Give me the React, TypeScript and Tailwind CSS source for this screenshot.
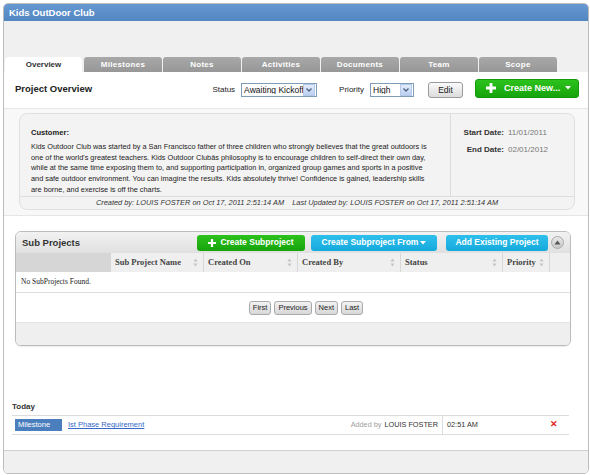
import React from "react";

const tabs = ["Overview", "Milestones", "Notes", "Activities", "Documents", "Team", "Scope"];

function SortIcon() {
  return (
    <svg width="5" height="9" viewBox="0 0 5 9" className="shrink-0">
      <path d="M2.5 0.5 L4.5 3.5 L0.5 3.5 Z" fill="#c4c4c4" />
      <path d="M2.5 8.5 L4.5 5.5 L0.5 5.5 Z" fill="#c4c4c4" />
    </svg>
  );
}

function Select({ value, width }: { value: string; width: string }) {
  return (
    <div className={`${width} h-[14px] border border-[#7f9db9] bg-white flex items-center overflow-hidden`}>
      <span className="flex-1 pl-[2px] text-[8.5px] leading-none text-[#111] whitespace-nowrap overflow-hidden">{value}</span>
      <div className="w-[12px] h-[12px] shrink-0 mr-px bg-gradient-to-b from-[#e3ecfb] to-[#bcd0f0] border border-[#b4c8ea] flex items-center justify-center">
        <svg width="6" height="4" viewBox="0 0 6 4">
          <path d="M0.5 0.5 L3 3 L5.5 0.5" stroke="#4d6185" strokeWidth="1.3" fill="none" />
        </svg>
      </div>
    </div>
  );
}

const bodyLines = [
  "Kids Outdoor Club was started by a San Francisco father of three children who strongly believes that the great outdoors is",
  "one of the world's greatest teachers. Kids Outdoor Clubâs philosophy is to encourage children to self-direct their own day,",
  "while at the same time exposing them to, and supporting participation in, organized group games and sports in a positive",
  "and safe outdoor environment. You can imagine the results. Kids absolutely thrive! Confidence is gained, leadership skills",
  "are borne, and exercise is off the charts.",
];

const columns = [
  { label: "Sub Project Name", w: "w-[93px]" },
  { label: "Created On", w: "w-[94px]" },
  { label: "Created By", w: "w-[103px]" },
  { label: "Status", w: "w-[102px]" },
  { label: "Priority", w: "w-[47px]" },
];

export default function App() {
  return (
    <div className="w-[590px] h-[475px] bg-white pt-[3px] pl-[3px] font-['Liberation_Sans',Arial,sans-serif]">
      <div className="w-[586px] h-[471px] border border-[#bdbdbd] rounded-[5px] overflow-hidden flex flex-col bg-white">
        {/* title bar */}
        <div className="h-[17px] shrink-0 bg-gradient-to-b from-[#6698d0] to-[#5387c2] flex items-center pl-[5px]">
          <span className="text-white font-bold text-[9.5px] leading-none">Kids OutDoor Club</span>
        </div>
        {/* tabs band */}
        <div className="h-[51px] shrink-0 bg-[#f0f0f0] flex items-end pl-px gap-px">
          {tabs.map((t, i) =>
            i === 0 ? (
              <div
                key={t}
                className="w-[77px] h-[15px] bg-white rounded-t-[4px] flex items-center justify-center text-[8px] font-bold text-[#333] mr-[1px]"
              >
                {t}
              </div>
            ) : (
              <div
                key={t}
                className="w-[78px] h-[15px] bg-gradient-to-b from-[#a8a8a8] to-[#979797] rounded-t-[3px] flex items-center justify-center text-[8px] font-bold text-white tracking-[0.3px]"
              >
                {t}
              </div>
            )
          )}
        </div>
        {/* project overview row */}
        <div className="h-[36px] shrink-0 flex items-center pl-[11px] pr-[9px]">
          <span className="font-bold text-[9.5px] text-[#222] leading-none -mt-[3px]">Project Overview</span>
          <div className="flex-1" />
          <span className="text-[8px] text-[#222] mr-[6px]">Status</span>
          <Select value="Awaiting Kickoff" width="w-[76px]" />
          <span className="text-[8px] text-[#222] ml-[22px] mr-[6px]">Priority</span>
          <Select value="High" width="w-[44px]" />
          <div className="ml-[14px] w-[35px] h-[16px] rounded-[3px] border border-[#9a9a9a] bg-gradient-to-b from-[#fafafa] to-[#dcdcdc] flex items-center justify-center text-[8.5px] text-[#222]">
            Edit
          </div>
          <div className="ml-[12px] w-[104px] h-[19px] -mt-[4px] rounded-[3px] bg-gradient-to-b from-[#2cc21c] to-[#16a30b] border border-[#139a0a] flex items-center pl-[10px] text-white">
            <svg width="10" height="10" viewBox="0 0 10 10">
              <path d="M3.6 0 H6.4 V3.6 H10 V6.4 H6.4 V10 H3.6 V6.4 H0 V3.6 H3.6 Z" fill="white" />
            </svg>
            <span className="ml-[8px] font-bold text-[9px] leading-none">Create New...</span>
            <svg width="6" height="4" viewBox="0 0 6 4" className="ml-[5px]">
              <path d="M0 0 H6 L3 3.5 Z" fill="white" />
            </svg>
          </div>
        </div>
        {/* info band */}
        <div className="h-[108px] shrink-0 bg-[#f8f8f8] border-t border-b border-[#e6e6e6] pt-[4px] pl-[15px] pr-[13px]">
          <div className="h-[97px] rounded-[8px] border border-[#e0e0e0] bg-[#f3f3f3] flex flex-col">
            <div className="flex flex-1">
              <div className="w-[430px] pl-[11px] pt-[14px] text-[7.35px] leading-[10.8px] text-[#222]">
                <div className="font-bold mb-[3px] text-[7.6px]">Customer:</div>
                {bodyLines.map((l) => (
                  <div key={l} className="whitespace-nowrap">
                    {l}
                  </div>
                ))}
              </div>
              <div className="flex-1 border-l border-[#dcdcdc] pt-[14px] text-[8px]">
                <div className="flex items-center h-[10px]">
                  <span className="w-[53px] text-right font-bold text-[#333]">Start Date:</span>
                  <span className="ml-[4px] text-[#777]">11/01/2011</span>
                </div>
                <div className="flex items-center h-[10px] mt-[7px]">
                  <span className="w-[53px] text-right font-bold text-[#333]">End Date:</span>
                  <span className="ml-[4px] text-[#777]">02/01/2012</span>
                </div>
              </div>
            </div>
            <div className="h-[15px] border-t border-[#dedede] flex items-center justify-center italic text-[7.4px] text-[#333] whitespace-pre pb-px">
              {"Created by: LOUIS FOSTER on Oct 17, 2011 2:51:14 AM    Last Updated by: LOUIS FOSTER on Oct 17, 2011 2:51:14 AM"}
            </div>
          </div>
        </div>
        {/* main white area */}
        <div className="flex-1 flex flex-col">
          <div className="pt-[15px] pl-[11px]">
            <div className="w-[556px] h-[115px] border border-[#bcbcbc] rounded-[6px] overflow-hidden flex flex-col bg-white shadow-[0_1px_1px_rgba(0,0,0,0.08)]">
              <div className="h-[21px] shrink-0 bg-gradient-to-b from-[#f2f2f2] to-[#e0e0e0] flex items-center pl-[6px] pr-[6px]">
                <span className="font-bold text-[9.5px] text-[#333] leading-none">Sub Projects</span>
                <div className="flex-1" />
                <div className="w-[108px] h-[16px] rounded-[3px] bg-gradient-to-b from-[#2cc21c] to-[#16a30b] flex items-center justify-center text-white font-bold text-[8.5px]">
                  <svg width="8" height="8" viewBox="0 0 10 10" className="mr-[4px]">
                    <path d="M3.6 0 H6.4 V3.6 H10 V6.4 H6.4 V10 H3.6 V6.4 H0 V3.6 H3.6 Z" fill="white" />
                  </svg>
                  Create Subproject
                </div>
                <div className="ml-[6px] w-[126px] h-[16px] rounded-[3px] bg-gradient-to-b from-[#2dc0ec] to-[#14a9dc] flex items-center justify-center text-white font-bold text-[8.5px]">
                  Create Subproject From
                  <svg width="6" height="4" viewBox="0 0 6 4" className="ml-[2px]">
                    <path d="M0 0 H6 L3 3.5 Z" fill="white" />
                  </svg>
                </div>
                <div className="ml-[9px] w-[102px] h-[16px] rounded-[3px] bg-gradient-to-b from-[#2dc0ec] to-[#14a9dc] flex items-center justify-center text-white font-bold text-[8.5px]">
                  Add Existing Project
                </div>
                <div className="ml-[3px] w-[13px] h-[13px] rounded-full bg-gradient-to-b from-[#e8e8e8] to-[#c8c8c8] border border-[#aaa] flex items-center justify-center">
                  <svg width="7" height="5" viewBox="0 0 7 5">
                    <path d="M3.5 0.5 L6.5 4.5 H0.5 Z" fill="#555" />
                  </svg>
                </div>
              </div>
              <div className="h-[19px] shrink-0 flex bg-[#efefef] text-[8.5px] font-bold text-[#444] font-['Liberation_Serif',serif]">
                <div className="w-[95px] bg-[#d6d6d6]" />
                {columns.map((c) => (
                  <div key={c.label} className={`${c.w} flex items-center pl-[4px] pr-[5px] border-r border-[#d8d8d8]`}>
                    <span className="flex-1 whitespace-nowrap">{c.label}</span>
                    <SortIcon />
                  </div>
                ))}
                <div className="flex-1" />
              </div>
              <div className="h-[21px] shrink-0 border-b border-[#dddddd] flex items-center pl-[5px] text-[7.5px] text-[#222] font-['Liberation_Serif',serif]">
                No SubProjects Found.
              </div>
              <div className="h-[29px] shrink-0 flex items-center justify-center gap-[3px] pl-[26px]">
                {["First", "Previous", "Next", "Last"].map((b) => (
                  <div
                    key={b}
                    className="h-[14px] px-[3px] rounded-[3px] border border-[#aaa] bg-gradient-to-b from-[#f2f2f2] to-[#d8d8d8] flex items-center text-[7.5px] text-[#222]"
                  >
                    {b}
                  </div>
                ))}
              </div>
              <div className="flex-1 bg-[#efefef] border-t border-[#e4e4e4]" />
            </div>
          </div>
          <div className="mt-[56px] pl-[8px] pr-[19px]">
            <div className="text-[8px] font-bold text-[#333] pb-[3px] leading-[10px]">Today</div>
            <div className="h-[20px] border-t border-b border-[#dcdcdc] flex items-center text-[7.3px]">
              <div className="ml-[3px] w-[47px] h-[12px] bg-[#4a7ebc] text-white text-[7.5px] flex items-center pl-[3px]">Milestone</div>
              <span className="ml-[6px] text-[#3568c9] underline text-[7.5px]">Ist Phase Requirement</span>
              <div className="flex-1" />
              <span className="text-[#a0a0a0]">Added by</span>
              <span className="ml-[3px] text-[#333]">LOUIS FOSTER</span>
              <div className="ml-[4px] h-full border-l border-[#dcdcdc]" />
              <span className="ml-[4px] text-[#333] w-[103px]">02:51 AM</span>
              <span className="text-[#e02222] font-bold text-[9px] w-[19px]">✕</span>
            </div>
          </div>
          <div className="flex-1" />
          <div className="h-[23px] shrink-0 bg-[#f0f0f0] border-t border-[#d0d0d0]" />
        </div>
      </div>
    </div>
  );
}
